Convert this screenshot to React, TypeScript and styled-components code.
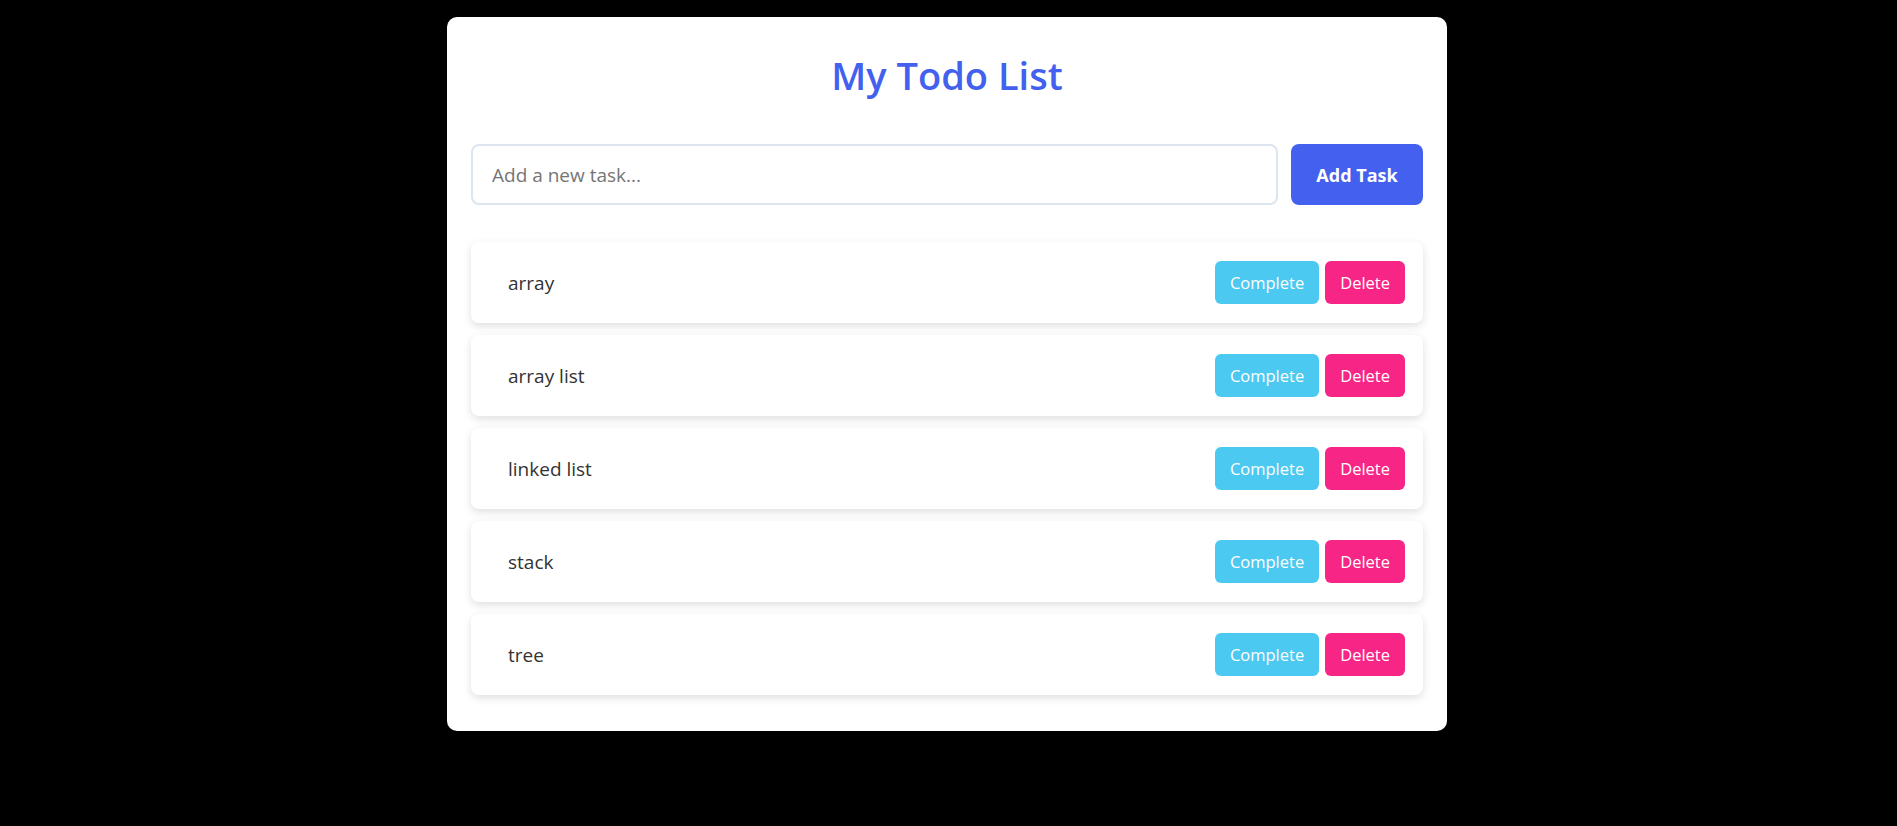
import React, { useState } from "react";
import styled, { createGlobalStyle } from "styled-components";

const GlobalStyle = createGlobalStyle`
	* {
		box-sizing: border-box;
	}

	body {
		margin: 0;
		background: #000;
		font-family: "Open Sans", "Noto Sans", sans-serif;
	}
`;

const StyledPage = styled.div`
	padding: 17px 3px 0 0;
	min-height: 826px;
`;

const StyledCard = styled.div`
	width: 1000px;
	margin: 0 auto;
	padding: 24px 24px 24px;
	background: #fff;
	border-radius: 10px;
`;

const StyledTitle = styled.h1`
	margin: 10px 0 44px;
	text-align: center;
	color: #4361ee;
	font-size: 38px;
	font-weight: 600;
	line-height: 1.3;
`;

const StyledForm = styled.form`
	display: flex;
	gap: 13px;
	margin-bottom: 37px;
`;

const StyledInput = styled.input`
	flex: 1;
	height: 61px;
	padding: 0 19px;
	border: 2px solid #dde5ee;
	border-radius: 8px;
	font-family: inherit;
	font-size: 19px;
	color: #333;
	outline: none;

	&::placeholder {
		color: #757575;
	}
`;

const StyledAddButton = styled.button`
	width: 132px;
	height: 61px;
	border: none;
	border-radius: 8px;
	background: #4361ee;
	color: #fff;
	font-family: inherit;
	font-size: 18px;
	font-weight: 700;
	cursor: pointer;
`;

const StyledList = styled.ul`
	display: flex;
	flex-direction: column;
	gap: 12px;
	margin: 0 0 12px;
	padding: 0;
	list-style: none;
`;

const StyledItem = styled.li`
	display: flex;
	align-items: center;
	justify-content: space-between;
	height: 81px;
	padding: 0 18px 0 37px;
	background: #fff;
	border-radius: 8px;
	box-shadow: 0 3px 8px rgba(0, 0, 0, 0.13);
`;

const StyledItemText = styled.span<{ $done: boolean }>`
	font-size: 19px;
	color: #333;
	text-decoration: ${({ $done }) => ($done ? "line-through" : "none")};
	opacity: ${({ $done }) => ($done ? 0.6 : 1)};
`;

const StyledActions = styled.div`
	display: flex;
	gap: 6px;
`;

const StyledActionButton = styled.button<{ $tone: "complete" | "delete" }>`
	height: 43px;
	padding: 0 15px;
	border: none;
	border-radius: 6px;
	background: ${({ $tone }) => ($tone === "complete" ? "#4cc9f0" : "#f72585")};
	color: #fff;
	font-family: inherit;
	font-size: 16.5px;
	cursor: pointer;
`;

type Todo = {
	id: number;
	text: string;
	done: boolean;
};

const initialTodos: Todo[] = [
	{ id: 1, text: "array", done: false },
	{ id: 2, text: "array list", done: false },
	{ id: 3, text: "linked list", done: false },
	{ id: 4, text: "stack", done: false },
	{ id: 5, text: "tree", done: false },
];

export default function App() {
	const [todos, setTodos] = useState<Todo[]>(initialTodos);
	const [draft, setDraft] = useState("");

	const addTodo = (event: React.FormEvent) => {
		event.preventDefault();
		const text = draft.trim();
		if (!text) return;
		setTodos((list) => [...list, { id: Date.now(), text, done: false }]);
		setDraft("");
	};

	const toggleTodo = (id: number) => {
		setTodos((list) =>
			list.map((todo) => (todo.id === id ? { ...todo, done: !todo.done } : todo)),
		);
	};

	const deleteTodo = (id: number) => {
		setTodos((list) => list.filter((todo) => todo.id !== id));
	};

	return (
		<>
			<GlobalStyle />
			<StyledPage>
				<StyledCard>
					<StyledTitle>My Todo List</StyledTitle>

					<StyledForm onSubmit={addTodo}>
						<StyledInput
							value={draft}
							onChange={(event) => setDraft(event.target.value)}
							placeholder="Add a new task..."
						/>
						<StyledAddButton type="submit">Add Task</StyledAddButton>
					</StyledForm>

					<StyledList>
						{todos.map((todo) => (
							<StyledItem key={todo.id}>
								<StyledItemText $done={todo.done}>{todo.text}</StyledItemText>
								<StyledActions>
									<StyledActionButton
										type="button"
										$tone="complete"
										onClick={() => toggleTodo(todo.id)}
									>
										Complete
									</StyledActionButton>
									<StyledActionButton
										type="button"
										$tone="delete"
										onClick={() => deleteTodo(todo.id)}
									>
										Delete
									</StyledActionButton>
								</StyledActions>
							</StyledItem>
						))}
					</StyledList>
				</StyledCard>
			</StyledPage>
		</>
	);
}
